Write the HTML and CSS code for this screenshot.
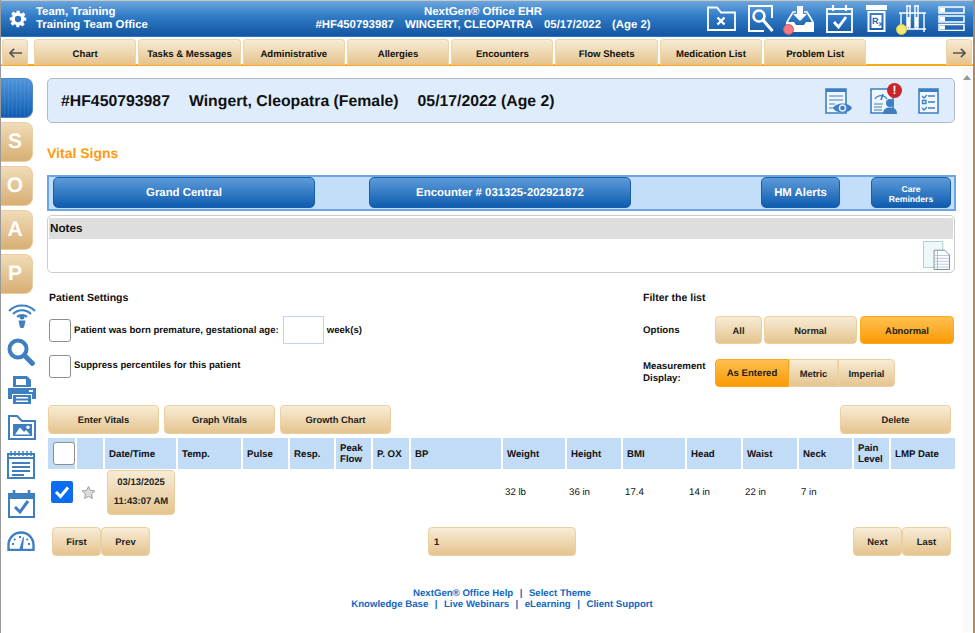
FILE: index.html
```html
<!DOCTYPE html>
<html lang="en">
<head>
<meta charset="utf-8">
<title>NextGen Office EHR - Vital Signs</title>
<link rel="stylesheet" href="styles.css">
</head>
<body>
<div class="app">
  <header class="topbar">
    <svg class="gear" viewBox="0 0 24 24"><path fill="#fff" d="M10 1h4l.6 3.100 1.900.8 2.600-1.800 2.800 2.800-1.800 2.600.8 1.900L23 10v4l-3.100.6-.8 1.900 1.800 2.600-2.800 2.800-2.600-1.800-1.900.8L14 23h-4l-.6-3.100-1.900-.8-2.600 1.800-2.800-2.800 1.800-2.600-.8-1.900L1 14v-4l3.100-.6.8-1.900-1.800-2.600 2.800-2.800 2.600 1.800 1.900-.8z"/><circle cx="12" cy="12" r="4.200" fill="#2a74c2"/></svg>
    <div class="user"><div>Team, Training</div><div>Training Team Office</div></div>
    <div class="title"><div>NextGen® Office EHR</div><div class="title-pt"><span>#HF450793987</span><span>WINGERT, CLEOPATRA</span><span>05/17/2022</span><span>(Age 2)</span></div></div>
    <div class="tools">
      <svg class="tool t-folder" viewBox="0 0 29 25"><path fill="none" stroke="#fff" stroke-width="1.800" d="M1 24V1.500h9l4 5h14V24z"/><path stroke="#fff" stroke-width="2.400" d="M10.500 11.500l7 7M17.500 11.500l-7 7"/></svg>
      <svg class="tool t-search" viewBox="0 0 26 27"><path fill="none" stroke="#fff" stroke-width="2" d="M24 13V1H1v25h15"/><circle cx="11" cy="11" r="5.500" fill="none" stroke="#fff" stroke-width="2.600"/><path stroke="#fff" stroke-width="3" d="M15 15l9.500 11"/></svg>
      <span class="tool-wrap">
        <svg class="tool t-inbox" viewBox="0 0 28 26"><path fill="#fff" d="M0 16h8l2 3h8l2-3h8v10H0z"/><path fill="none" stroke="#fff" stroke-width="1.600" d="M1 16l6-10h3M27 16L21 6h-3"/><path fill="#fff" d="M11 0h6v8h4l-7 7-7-7h4z"/></svg>
        <i class="dot dot-red"></i>
      </span>
      <svg class="tool t-cal" viewBox="0 0 27 28"><path fill="none" stroke="#fff" stroke-width="1.800" d="M1 4h25v23H1z"/><path stroke="#fff" stroke-width="1.800" d="M1 9h25"/><path stroke="#fff" stroke-width="2.200" d="M7 0v6M20 0v6"/><path fill="none" stroke="#fff" stroke-width="2.800" d="M8 17l4.500 5L20 12"/></svg>
      <svg class="tool t-rx" viewBox="0 0 21 27"><path fill="#fff" d="M0 0h21v5H0z"/><path fill="none" stroke="#fff" stroke-width="2" d="M2.500 7h16v19h-16z"/><rect x="5.500" y="10" width="10" height="13" fill="#fff"/><text x="6" y="19" class="rx">R<tspan class="rx-sub" dy="2">x</tspan></text></svg>
      <span class="tool-wrap">
        <svg class="tool t-tubes" viewBox="0 0 27 27"><path fill="none" stroke="#fff" stroke-width="1.400" d="M0 8h27M0 24h27M2 8v19M25 8v19M7 1h5M15 1h5M8 1v21a1.500 1.500 0 0 0 3 0V1M16 1v21a1.500 1.500 0 0 0 3 0V1"/><path fill="#fff" d="M8 12h3v10H8zM16 12h3v10h-3z"/></svg>
        <i class="dot dot-yellow"></i>
      </span>
      <svg class="tool t-list" viewBox="0 0 27 25"><path fill="none" stroke="#fff" stroke-width="1.500" d="M1 1h25v6H1zM1 10h25v6H1zM1 18.500h25v6H1z"/><path fill="#fff" d="M2 2h5v4H2zM2 11h5v4H2zM2 19.500h5v4H2z"/></svg>
    </div>
  </header>

  <nav class="tabs">
    <button class="tab tab-arrow"><svg viewBox="0 0 14 10"><path d="M1 5h13M5.500.5L1 5l4.500 4.500" fill="none" stroke="#555" stroke-width="1.800"/></svg></button>
    <button class="tab">Chart</button>
    <button class="tab">Tasks &amp; Messages</button>
    <button class="tab">Administrative</button>
    <button class="tab">Allergies</button>
    <button class="tab">Encounters</button>
    <button class="tab">Flow Sheets</button>
    <button class="tab">Medication List</button>
    <button class="tab">Problem List</button>
    <button class="tab tab-arrow tab-next"><svg viewBox="0 0 14 10"><path d="M0 5h13M8.500.5L13 5 8.500 9.500" fill="none" stroke="#555" stroke-width="1.800"/></svg></button>
  </nav>

  <div class="body">
    <aside class="side">
      <div class="soap soap-blue"></div>
      <div class="soap">S</div>
      <div class="soap">O</div>
      <div class="soap">A</div>
      <div class="soap">P</div>
      <svg class="side-icon si-wifi" viewBox="0 0 28 28"><g fill="none" stroke="#3f7fc0" stroke-width="2"><path d="M1 11a18 18 0 0 1 26 0M5 14a12.500 12.500 0 0 1 18 0M9 17a7 7 0 0 1 10 0"/></g><circle cx="14" cy="17" r="2.500" fill="#3f7fc0"/><path fill="#3f7fc0" d="M10.500 20.500h7l-1 5-1 2.500h-3l-1-2.500z"/></svg>
      <svg class="side-icon si-search" viewBox="0 0 28 28"><circle cx="11" cy="11" r="8.500" fill="none" stroke="#3f7fc0" stroke-width="4"/><path stroke="#3f7fc0" stroke-width="5" d="M17 17l10 10"/></svg>
      <svg class="side-icon si-print" viewBox="0 0 28 28"><path fill="#3f7fc0" d="M5 0h14l4 4v7H5zM0 12h28v11h-4v-5H4v5H0zM5 19h18v9H5z"/><path fill="#fff" d="M8 3h10v6H8zM8 21h12v1.500H8zM8 24.500h12V26H8zM21 14h4v2h-4z"/></svg>
      <svg class="side-icon si-folder" viewBox="0 0 28 25"><path fill="none" stroke="#3f7fc0" stroke-width="2" d="M1 24V1h8l5 5h13v18z"/><path fill="#3f7fc0" d="M5 9h19v12H5z"/><path fill="#fff" d="M7 19.500l5-7 4 4.500 2-2 4 4.500zM20 10.500a1.800 1.800 0 1 1 0 3.600 1.800 1.800 0 0 1 0-3.600z"/></svg>
      <svg class="side-icon si-note" viewBox="0 0 28 28"><path fill="none" stroke="#3f7fc0" stroke-width="2" d="M1 3h26v24H1z"/><path stroke="#3f7fc0" stroke-width="1.500" d="M4 0v5M8 0v5M12 0v5M16 0v5M20 0v5M24 0v5"/><path stroke="#3f7fc0" stroke-width="2" d="M1 7h26M5 12h18M5 16h18M5 20h18M5 24h12"/></svg>
      <svg class="side-icon si-cal" viewBox="0 0 27 28"><path fill="none" stroke="#3f7fc0" stroke-width="2" d="M1 4h25v23H1z"/><path fill="#3f7fc0" d="M1 4h25v5H1z"/><path stroke="#3f7fc0" stroke-width="2.600" d="M6 0v6M21 0v6"/><path fill="none" stroke="#3f7fc0" stroke-width="3" d="M7 17l5 5 8-11"/></svg>
      <svg class="side-icon si-gauge" viewBox="0 0 28 20"><path fill="none" stroke="#3f7fc0" stroke-width="2.400" d="M1.500 19v-5a12.500 12.500 0 0 1 25 0v5z"/><path fill="#3f7fc0" d="M13 16l3-10 1 .5-1 10a1.700 1.700 0 1 1-3-.5z"/><path stroke="#3f7fc0" stroke-width="2" d="M5 13h2M7 8l1.500 1M13 5v2M21 8l-1.500 1M23 13h-2"/></svg>
    </aside>

    <main class="content">
      <section class="banner">
        <div class="banner-text"><span>#HF450793987</span><span>Wingert, Cleopatra (Female)</span><span>05/17/2022 (Age 2)</span></div>
        <div class="banner-icons">
          <svg class="bi" viewBox="0 0 27 26"><path fill="#f0f6fd" stroke="#3f7fc0" stroke-width="1.600" d="M1 1h20v24H1z"/><path fill="#3f7fc0" d="M1 1h20v3H1z"/><path stroke="#3f7fc0" stroke-width="1.200" d="M4 8h14M4 12h14M4 16h6M4 20h6"/><path fill="#3f7fc0" d="M8 20c3-6 16-6 19 0-3 6-16 6-19 0z"/><circle cx="17.500" cy="20" r="3.800" fill="#e0edfb"/><circle cx="17.500" cy="20" r="2.300" fill="#3f7fc0"/></svg>
          <span class="bi-wrap">
            <svg class="bi" viewBox="0 0 27 26"><path fill="#f0f6fd" stroke="#3f7fc0" stroke-width="1.600" d="M1 1h22v24H1z"/><path stroke="#3f7fc0" stroke-width="1.200" d="M4 16h9M4 19h8M4 22h8"/><path fill="none" stroke="#3f7fc0" stroke-width="1.200" d="M5 11a7 7 0 0 1 12 0"/><path stroke="#3f7fc0" stroke-width="1.600" d="M11 12l2-6"/><circle cx="20" cy="15" r="4" fill="#3f7fc0"/><path fill="#3f7fc0" d="M13 26c0-5 3-6.500 7-6.500s7 1.500 7 6.500z"/></svg>
            <i class="alert">!</i>
          </span>
          <svg class="bi bi-check" viewBox="0 0 21 26"><path fill="#f0f6fd" stroke="#3f7fc0" stroke-width="1.600" d="M1 1h19v24H1z"/><path fill="#3f7fc0" d="M1 1h19v3H1z"/><path stroke="#3f7fc0" stroke-width="1.300" d="M10 8h7M10 14h7M10 20h7"/><path fill="none" stroke="#3f7fc0" stroke-width="1.300" d="M4 8l2 2 3-3M4.500 12.500h3.500v3H4.500zM4 20l2 2 3-3"/></svg>
        </div>
      </section>

      <h1 class="page-title">Vital Signs</h1>

      <div class="bluebar">
        <button class="bb bb-1">Grand Central</button>
        <button class="bb bb-2">Encounter # 031325-202921872</button>
        <button class="bb bb-3">HM Alerts</button>
        <button class="bb bb-4">Care<br>Reminders</button>
      </div>

      <section class="notes">
        <div class="notes-head">Notes</div>
        <div class="notes-body">
          <svg class="notes-icon" viewBox="0 0 28 30"><path fill="#eef7f9" stroke="#a9d0d6" d="M.5.500h20v27H.5z"/><path fill="#fff" stroke="#7d8a8a" d="M11.500 9.500h11l5 5v15h-16z"/><path stroke="#b7c6e6" d="M12 15h15M12 18h15M12 21h15M12 24h15M12 27h15"/><path stroke="#f0a0a0" d="M15 10v19"/></svg>
        </div>
      </section>

      <div class="settings">
        <div class="col-left">
          <h2 class="sec">Patient Settings</h2>
          <div class="line line-1"><span class="cb"></span><label class="lbl lbl-first">Patient was born premature, gestational age:</label><span class="txt"></span><span class="lbl">week(s)</span></div>
          <div class="line line-2"><span class="cb"></span><label class="lbl lbl-up">Suppress percentiles for this patient</label></div>
        </div>
        <div class="col-right">
          <h2 class="sec">Filter the list</h2>
          <div class="fline fline-1">
            <span class="flabel flabel-opt">Options</span>
            <div class="opts">
              <button class="btn o-all">All</button>
              <button class="btn o-norm">Normal</button>
              <button class="btn o-abn on">Abnormal</button>
            </div>
          </div>
          <div class="fline fline-2">
            <span class="flabel">Measurement Display:</span>
            <div class="seg">
              <button class="btn s-1 on">As Entered</button>
              <button class="btn s-2">Metric</button>
              <button class="btn s-3">Imperial</button>
            </div>
          </div>
        </div>
      </div>

      <div class="actions">
        <button class="btn act">Enter Vitals</button>
        <button class="btn act">Graph Vitals</button>
        <button class="btn act">Growth Chart</button>
        <button class="btn act act-del">Delete</button>
      </div>

      <table class="grid">
        <colgroup>
          <col class="c1"><col class="c2"><col class="c3"><col class="c4"><col class="c5"><col class="c6"><col class="c7"><col class="c8"><col class="c9"><col class="c10"><col class="c11"><col class="c12"><col class="c13"><col class="c14"><col class="c15"><col class="c16"><col class="c17">
        </colgroup>
        <thead>
          <tr>
            <th class="th-cb"><span class="cb cb-head"></span></th><th></th><th>Date/Time</th><th>Temp.</th><th>Pulse</th><th>Resp.</th><th>Peak Flow</th><th>P. OX</th><th>BP</th><th>Weight</th><th>Height</th><th>BMI</th><th>Head</th><th>Waist</th><th>Neck</th><th>Pain Level</th><th>LMP Date</th>
          </tr>
        </thead>
        <tbody>
          <tr>
            <td class="td-cb"><span class="cb-on"><svg viewBox="0 0 22 22"><path d="M5 11l4.500 4.500L17 6.500" fill="none" stroke="#fff" stroke-width="3"/></svg></span></td>
            <td class="td-star"><svg class="star" viewBox="0 0 16 16"><path fill="#ddd" stroke="#999" d="M8 1.500l2 4.300 4.700.6-3.500 3.200.9 4.700L8 12l-4.100 2.300.9-4.700L1.300 6.400 6 5.800z"/></svg></td>
            <td class="td-date"><button class="btn date">03/13/2025<br>11:43:07 AM</button></td>
            <td></td><td></td><td></td><td></td><td></td><td></td><td>32 lb</td><td>36 in</td><td>17.4</td><td>14 in</td><td>22 in</td><td>7 in</td><td></td><td></td>
          </tr>
        </tbody>
      </table>

      <div class="pager">
        <button class="btn pg">First</button>
        <button class="btn pg">Prev</button>
        <button class="btn pg-num">1</button>
        <button class="btn pg">Next</button>
        <button class="btn pg">Last</button>
      </div>

      <footer class="foot">
        <div><a>NextGen® Office Help</a><b>|</b><a>Select Theme</a></div>
        <div><a>Knowledge Base</a><b>|</b><a>Live Webinars</a><b>|</b><a>eLearning</a><b>|</b><a>Client Support</a></div>
      </footer>
    </main>

    <div class="scroll"><i class="scroll-up"></i></div>
  </div>
</div>
</body>
</html>
```

FILE: styles.css
```css
* { box-sizing: border-box; text-rendering: geometricPrecision; }
html, body { margin: 0; padding: 0; }
body {
  width: 975px;
  height: 633px;
  overflow: hidden;
  background: #a98a6c;
  font-family: "Liberation Sans", Arial, sans-serif;
  color: #111;
}
button { font-family: inherit; margin: 0; cursor: default; }

.app {
  width: 972px;
  height: 633px;
  margin-left: 1px;
  border-top: 1px solid #c8c8c8;
  background: #fff;
  box-shadow: -1px 0 0 #9a9a9a;
}

/* header */
.topbar {
  height: 36px;
  display: flex;
  position: relative;
  background: linear-gradient(#6ca6dd, #2f7ac6 45%, #14559f);
  border-bottom: 1px solid #1d7be0;
  color: #fff;
  font-weight: bold;
  font-size: 11.400px;
  line-height: 13px;
}
.gear { width: 18px; height: 18px; margin: 9px 0 0 8px; flex: none; }
.user { margin: 5px 0 0 9px; width: 200px; }
.title { position: absolute; left: 0; top: 5px; text-align: center; width: 964px; }
.title-pt span { margin-left: 11px; }
.title-pt span:first-child { margin-left: 0; }
.tools {
  position: absolute;
  left: 706px;
  top: 0;
  width: 258px;
  height: 35px;
  display: flex;
  justify-content: space-between;
  align-items: center;
}
.tool { display: block; }
.t-folder { width: 29px; height: 25px; }
.t-search { width: 26px; height: 27px; }
.t-inbox { width: 28px; height: 26px; }
.t-cal { width: 27px; height: 28px; }
.t-rx { width: 21px; height: 27px; }
.t-tubes { width: 27px; height: 27px; }
.t-list { width: 27px; height: 25px; }
.rx { font: bold 9px "Liberation Sans", sans-serif; fill: #1f66b3; }
.rx-sub { font-size: 7px; }
.tool-wrap { position: relative; display: block; }
.dot { position: absolute; width: 11px; height: 11px; border-radius: 50%; left: -3px; bottom: -3px; }
.dot-red { background: #f27a82; border: 1px solid #d65a60; }
.dot-yellow { background: #f5ea6e; border: 1px solid #d9cd58; }

/* tabs */
.tabs {
  height: 29px;
  padding-top: 2px;
  display: flex;
  gap: 2px;
  border-bottom: 2px solid #f8a91c;
  background: #fff;
}
.tab {
  width: 102.300px;
  height: 26px;
  padding: 3px 0 0;
  border: 1px solid #efd3a0;
  border-bottom: none;
  border-radius: 4px 4px 0 0;
  background: linear-gradient(#f7ecd6, #e5c28a);
  font-size: 9.600px;
  font-weight: bold;
  color: #111;
}
.tab-arrow {
  width: 26px;
  margin: 0 4px 0 1px;
  padding: 0;
  display: flex;
  align-items: center;
  justify-content: center;
}
.tab-arrow svg { width: 13px; height: 10px; }
.tab-next { margin: 0 0 0 78px; }

/* body */
.body { display: flex; height: 566px; }

.side {
  width: 46px;
  flex: none;
  padding-top: 12px;
  display: flex;
  flex-direction: column;
  align-items: flex-start;
}
.soap {
  width: 32px;
  height: 40px;
  margin-bottom: 4px;
  border: 1px solid #e9cfa3;
  border-left: none;
  border-radius: 0 8px 8px 0;
  background: linear-gradient(#f0dcb8, #d8ae72);
  color: #fff;
  font-size: 21px;
  font-weight: bold;
  text-align: center;
  line-height: 38px;
  padding-right: 3px;
}
.soap-blue {
  background: repeating-linear-gradient(90deg, transparent 0 3px, rgba(255,255,255,.07) 3px 4px), linear-gradient(#4d95dc, #105eb4);
  border-color: #4c86c4;
}
.side-icon { display: block; flex: none; margin-left: 7px; }
.si-wifi { width: 28px; height: 28px; margin-top: 2px; }
.si-search { width: 28px; height: 28px; margin-top: 10px; margin-left: 6px; }
.si-print { width: 28px; height: 28px; margin-top: 10px; }
.si-folder { width: 28px; height: 25px; margin-top: 11px; }
.si-note { width: 28px; height: 28px; margin-top: 11px; margin-left: 6px; }
.si-cal { width: 27px; height: 28px; margin-top: 11px; }
.si-gauge { width: 28px; height: 20px; margin-top: 13px; margin-left: 6px; }

.content { width: 916px; flex: none; }
.scroll { flex: 1; background: #fafafa; position: relative; }
.scroll-up {
  position: absolute; left: 0; top: 9px; width: 0; height: 0;
  border: 4px solid transparent; border-top: none; border-bottom: 5px solid #999;
}

/* banner */
.banner {
  margin-top: 12px;
  width: 908px;
  height: 45px;
  display: flex;
  align-items: center;
  justify-content: space-between;
  padding: 0 15px 0 13px;
  background: #deecfb;
  border: 1px solid #b5b9be;
  border-radius: 5px;
}
.banner-text { font-size: 15.800px; font-weight: bold; color: #111; padding-top: 2px; }
.banner-text span { margin-right: 19px; }
.banner-icons { display: flex; align-items: center; gap: 18px; }
.bi { width: 27px; height: 26px; display: block; }
.bi-check { width: 21px; margin-left: 3px; }
.bi-wrap { position: relative; display: block; }
.alert {
  position: absolute; right: -5px; top: -5px; width: 15px; height: 15px;
  background: #c9252b; color: #fff; border-radius: 50%;
  font: bold 12px/15px "Liberation Sans", sans-serif; text-align: center;
}

.page-title {
  margin: 22px 0 0;
  height: 18px;
  font-size: 14px;
  line-height: 16px;
  font-weight: bold;
  color: #fb9c14;
}

/* blue bar */
.bluebar {
  margin-top: 12px;
  width: 909px;
  height: 36px;
  display: flex;
  padding: 0 0 0 4px;
  background: #c3def9;
  border: 2px solid #6aa5e4;
}
.bb {
  flex: none;
  height: 31px;
  padding: 0;
  border: 1px solid #1b5ea8;
  border-radius: 5px;
  background: linear-gradient(#5c9bd9, #0f5cb0);
  color: #fff;
  font-size: 11.400px;
  font-weight: bold;
}
.bb-1 { width: 262px; }
.bb-2 { width: 262px; margin-left: 54px; }
.bb-3 { width: 79px; margin-left: 130px; }
.bb-4 { width: 80px; margin-left: 31px; font-size: 8.600px; line-height: 10px; padding-top: 3px; }

/* notes */
.notes {
  margin-top: 4px;
  width: 908px;
  height: 58px;
  padding: 2px 1px 0;
  border: 1px solid #ccc;
  border-radius: 5px;
}
.notes-head {
  height: 21px;
  background: #dedede;
  font-size: 11.700px;
  font-weight: bold;
  line-height: 21px;
  padding-left: 1px;
}
.notes-body { display: flex; justify-content: flex-end; padding: 2px 3px 0 0; }
.notes-icon { width: 27px; height: 29px; display: block; }

/* settings */
.settings { display: flex; margin-top: 19px; height: 113px; }
.col-left { width: 596px; padding-left: 2px; }
.col-right { flex: 1; }
.sec { margin: 0; height: 13px; font-size: 10.500px; line-height: 13px; font-weight: bold; }
.lbl { font-size: 9.600px; font-weight: bold; }
.lbl-first { margin-left: 3px; }
.cb {
  display: block;
  width: 22px;
  height: 23px;
  background: #fff;
  border: 1px solid #8f8f8f;
  border-radius: 3px;
  flex: none;
}
.line { display: flex; align-items: center; }
.line-1 { margin-top: 11px; height: 28px; }
.txt { width: 41px; height: 28px; border: 1px solid #bcd6f2; margin: 0 3px 0 4px; }
.line-2 { margin-top: 11px; height: 23px; }
.lbl-up { margin: -3px 0 0 3px; }

.fline { display: flex; align-items: center; }
.fline-1 { margin-top: 11px; }
.fline-2 { margin-top: 15px; }
.flabel { width: 72px; font-size: 9.700px; font-weight: bold; line-height: 12px; }
.flabel-opt { padding-top: 2px; }
.btn {
  height: 28px;
  padding: 0;
  border: 1px solid #edd0a0;
  border-radius: 4px;
  background: linear-gradient(#f7ecd6, #e5c48e);
  font-size: 9.400px;
  font-weight: bold;
  color: #222;
}
.btn.on {
  background: linear-gradient(#ffc050, #fb9a05);
  border-color: #f7a81e;
  color: #222;
}
.opts { display: flex; }
.o-all { width: 47px; margin-right: 2px; }
.o-norm { width: 93px; margin-right: 3px; }
.o-abn { width: 94px; }
.seg { display: flex; }
.s-1 { width: 74px; border-radius: 4px 0 0 4px; font-size: 9.600px; }
.s-2 { width: 49px; border-radius: 0; }
.s-3 { width: 57px; border-radius: 0 4px 4px 0; }

/* actions */
.actions { display: flex; gap: 5px; padding-left: 1px; }
.act { width: 111px; height: 29px; }
.act-del { margin-left: 444px; }

/* table */
.grid {
  margin-top: 4px;
  width: 907px;
  margin-left: 1px;
  table-layout: fixed;
  border-collapse: collapse;
  font-size: 9.700px;
}
.c1 { width: 28px; } .c2 { width: 28px; } .c3 { width: 73px; } .c4 { width: 65px; }
.c5 { width: 47px; } .c6 { width: 46px; } .c7 { width: 37px; } .c8 { width: 38px; }
.c9 { width: 92px; } .c10 { width: 64px; } .c11 { width: 56px; } .c12 { width: 64px; }
.c13 { width: 56px; } .c14 { width: 56px; } .c15 { width: 55px; } .c16 { width: 37px; } .c17 { width: 65px; }
.grid th {
  height: 31px;
  padding: 1px 2px 0 4px;
  background: #c2dcf8;
  border-left: 2px solid #fff;
  text-align: left;
  font-weight: bold;
  font-size: 9.700px;
  line-height: 11px;
}
.grid th:first-child { border-left: none; }
.grid th.th-cb { padding: 0 0 0 5px; }
.cb-head { width: 22px; }
.grid td { height: 46px; padding: 0 2px; vertical-align: middle; border: none; }
.grid td:nth-child(n+4) { padding-left: 3px; }
.cb-on {
  display: block;
  width: 22px;
  height: 22px;
  margin-left: 1px;
  background: #0a6cf0;
  border-radius: 2px;
}
.cb-on svg { display: block; width: 22px; height: 22px; }
.star { width: 15px; height: 15px; display: block; margin-left: 3px; }
.grid td.td-date { padding-left: 3px; }
.date { width: 68px; height: 45px; font-size: 9.500px; line-height: 19px; display: block; }

/* pager */
.pager { display: flex; margin-top: 12px; padding-left: 5px; }
.pg { width: 49px; height: 29px; }
.pg-num { width: 148px; height: 29px; margin: 0 277px 0 278px; text-align: left; padding-left: 5px; }

/* footer */
.foot {
  margin-top: 32px;
  width: 910px;
  text-align: center;
  font-size: 9.650px;
  line-height: 11px;
  font-weight: bold;
  color: #1267bf;
}
.foot b { margin: 0 6.500px; font-weight: bold; }
```
